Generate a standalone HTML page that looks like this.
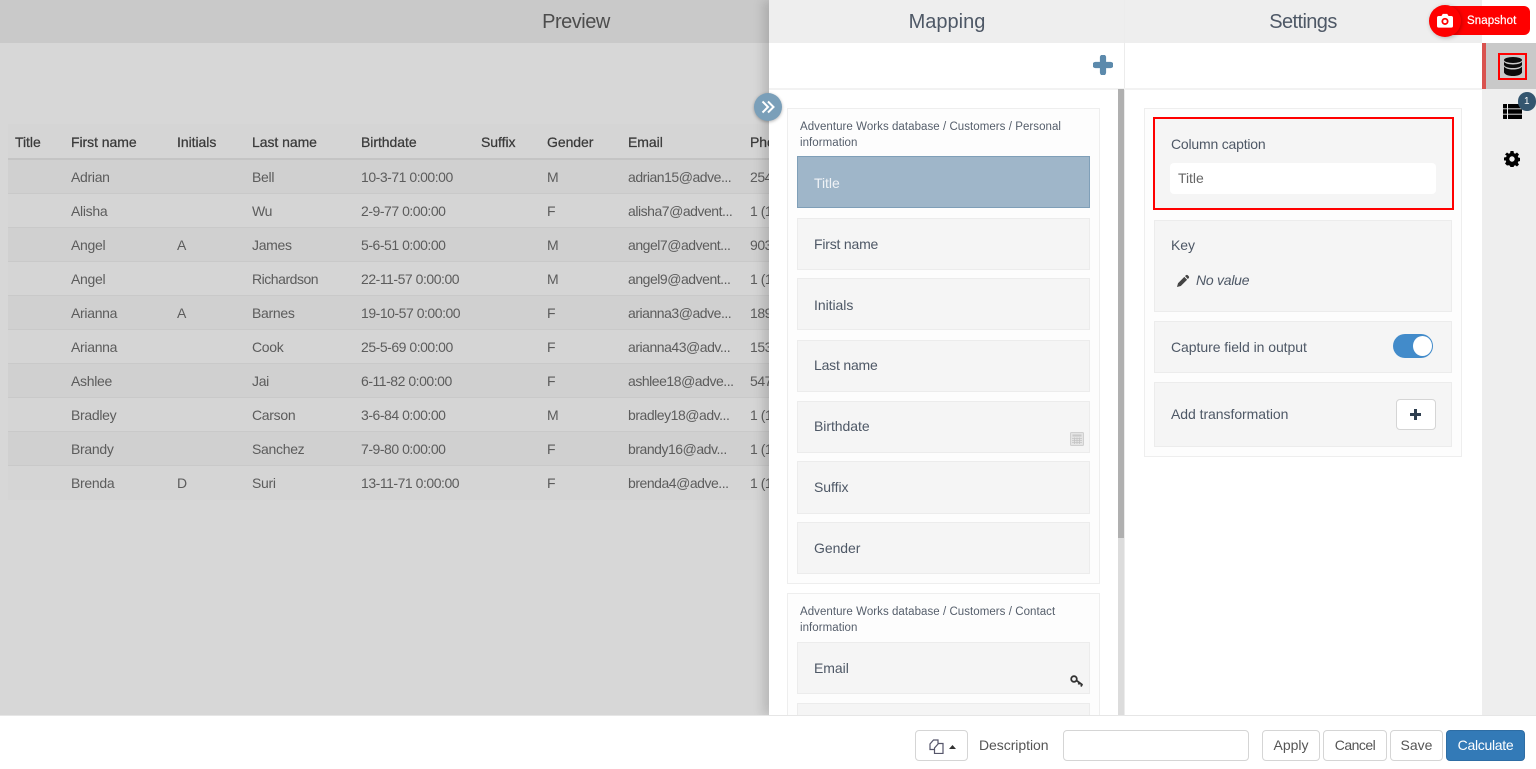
<!DOCTYPE html>
<html><head><meta charset="utf-8"><style>
html,body{margin:0;padding:0}
body{width:1536px;height:769px;position:relative;overflow:hidden;background:#d7d7d7;font-family:"Liberation Sans",sans-serif;color:#4e5866}
div,span,svg{position:absolute;box-sizing:border-box}
.t{line-height:20px;height:20px;white-space:nowrap;font-size:14px;letter-spacing:-.05px}
.h{color:#3a3a3a;letter-spacing:-.05px;-webkit-text-stroke:.25px #3a3a3a}
.d{color:#5c5c5c;letter-spacing:-.3px}
.n{letter-spacing:-.47px}
.r{left:8px;width:762px;height:34px;border-bottom:1px solid #c9c9c9}
.o{background:#d0d0d0}.e{background:#d5d5d5}
.hd{line-height:44px;height:43px;text-align:center;font-size:20px;top:0}
.it{left:797px;width:293px;background:#f5f5f5;border:1px solid #ececec}
.gl{font-size:11.5px;letter-spacing:.05px;color:#555e6b;line-height:15.5px;left:800px;width:285px}
.bx{background:#f5f5f5;border:1px solid #ececec;left:1154px;width:298px}
.btn{background:#fff;border:1px solid #d5d5d5;border-radius:4px;top:730px;height:31px;text-align:center;line-height:29px;font-size:14px;color:#555}
</style></head><body>

<div style="left:0;top:0;width:770px;height:43px;background:#c9c9c9"></div>
<div class="hd" style="left:476px;width:200px;color:#4d4d4d;letter-spacing:-.5px">Preview</div>

<div style="left:8px;top:124px;width:762px;height:36px;background:#d5d5d5;border-bottom:2px solid #c4c4c4"></div>
<div class="r o" style="top:160px"></div><div class="r e" style="top:194px"></div><div class="r o" style="top:228px"></div><div class="r e" style="top:262px"></div><div class="r o" style="top:296px"></div><div class="r e" style="top:330px"></div><div class="r o" style="top:364px"></div><div class="r e" style="top:398px"></div><div class="r o" style="top:432px"></div><div class="r e" style="top:466px;border-bottom:0"></div>

<span class="t h" style="left:15px;top:132px">Title</span><span class="t h" style="left:71px;top:132px">First name</span><span class="t h" style="left:177px;top:132px">Initials</span><span class="t h" style="left:252px;top:132px">Last name</span><span class="t h" style="left:361px;top:132px">Birthdate</span><span class="t h" style="left:481px;top:132px">Suffix</span><span class="t h" style="left:547px;top:132px">Gender</span><span class="t h" style="left:628px;top:132px">Email</span><span class="t h" style="left:750px;top:132px">Phone</span>

<span class="t d" style="left:71px;top:167px">Adrian</span><span class="t d" style="left:252px;top:167px">Bell</span><span class="t d n" style="left:361px;top:167px">10-3-71 0:00:00</span><span class="t d" style="left:547px;top:167px">M</span><span class="t d n" style="left:628px;top:167px">adrian15@adve...</span><span class="t d n" style="left:750px;top:167px">254</span>
<span class="t d" style="left:71px;top:201px">Alisha</span><span class="t d" style="left:252px;top:201px">Wu</span><span class="t d n" style="left:361px;top:201px">2-9-77 0:00:00</span><span class="t d" style="left:547px;top:201px">F</span><span class="t d n" style="left:628px;top:201px">alisha7@advent...</span><span class="t d n" style="left:750px;top:201px">1 (1</span>
<span class="t d" style="left:71px;top:235px">Angel</span><span class="t d" style="left:177px;top:235px">A</span><span class="t d" style="left:252px;top:235px">James</span><span class="t d n" style="left:361px;top:235px">5-6-51 0:00:00</span><span class="t d" style="left:547px;top:235px">M</span><span class="t d n" style="left:628px;top:235px">angel7@advent...</span><span class="t d n" style="left:750px;top:235px">903</span>
<span class="t d" style="left:71px;top:269px">Angel</span><span class="t d n" style="left:252px;top:269px">Richardson</span><span class="t d n" style="left:361px;top:269px">22-11-57 0:00:00</span><span class="t d" style="left:547px;top:269px">M</span><span class="t d n" style="left:628px;top:269px">angel9@advent...</span><span class="t d n" style="left:750px;top:269px">1 (1</span>
<span class="t d" style="left:71px;top:303px">Arianna</span><span class="t d" style="left:177px;top:303px">A</span><span class="t d" style="left:252px;top:303px">Barnes</span><span class="t d n" style="left:361px;top:303px">19-10-57 0:00:00</span><span class="t d" style="left:547px;top:303px">F</span><span class="t d n" style="left:628px;top:303px">arianna3@adve...</span><span class="t d n" style="left:750px;top:303px">189</span>
<span class="t d" style="left:71px;top:337px">Arianna</span><span class="t d" style="left:252px;top:337px">Cook</span><span class="t d n" style="left:361px;top:337px">25-5-69 0:00:00</span><span class="t d" style="left:547px;top:337px">F</span><span class="t d n" style="left:628px;top:337px">arianna43@adv...</span><span class="t d n" style="left:750px;top:337px">153</span>
<span class="t d" style="left:71px;top:371px">Ashlee</span><span class="t d" style="left:252px;top:371px">Jai</span><span class="t d n" style="left:361px;top:371px">6-11-82 0:00:00</span><span class="t d" style="left:547px;top:371px">F</span><span class="t d n" style="left:628px;top:371px">ashlee18@adve...</span><span class="t d n" style="left:750px;top:371px">547</span>
<span class="t d" style="left:71px;top:405px">Bradley</span><span class="t d" style="left:252px;top:405px">Carson</span><span class="t d n" style="left:361px;top:405px">3-6-84 0:00:00</span><span class="t d" style="left:547px;top:405px">M</span><span class="t d n" style="left:628px;top:405px">bradley18@adv...</span><span class="t d n" style="left:750px;top:405px">1 (1</span>
<span class="t d" style="left:71px;top:439px">Brandy</span><span class="t d" style="left:252px;top:439px">Sanchez</span><span class="t d n" style="left:361px;top:439px">7-9-80 0:00:00</span><span class="t d" style="left:547px;top:439px">F</span><span class="t d n" style="left:628px;top:439px">brandy16@adv...</span><span class="t d n" style="left:750px;top:439px">1 (1</span>
<span class="t d" style="left:71px;top:473px">Brenda</span><span class="t d" style="left:177px;top:473px">D</span><span class="t d" style="left:252px;top:473px">Suri</span><span class="t d n" style="left:361px;top:473px">13-11-71 0:00:00</span><span class="t d" style="left:547px;top:473px">F</span><span class="t d n" style="left:628px;top:473px">brenda4@adve...</span><span class="t d n" style="left:750px;top:473px">1 (1</span>

<!-- panel -->
<div style="left:769px;top:0;width:767px;height:715px;background:#fff;box-shadow:-6px 0 10px rgba(0,0,0,.14)"></div>
<div style="left:769px;top:0;width:713px;height:43px;background:#eee"></div>
<div style="left:1124px;top:0;width:1px;height:715px;background:#ececec"></div>
<div style="left:769px;top:88px;width:713px;height:2px;background:#f2f2f2"></div>
<div class="hd" style="left:847px;width:200px">Mapping</div>
<div class="hd" style="left:1203px;width:200px;letter-spacing:-.6px">Settings</div>
<div style="left:1482px;top:43px;width:54px;height:672px;background:#eee"></div>
<div style="left:1482px;top:43px;width:54px;height:46px;background:#c9c9c9;border-left:4px solid #d9534f"></div>

<!-- plus -->
<svg style="left:1093px;top:55px" width="20" height="20" viewBox="0 0 20 20"><path d="M10 2.500v15M2.500 10h15" fill="none" stroke="#5c8aac" stroke-width="6.200" stroke-linecap="round"/></svg>

<!-- scrollbar -->
<div style="left:1118px;top:89px;width:6px;height:626px;background:#dcdcdc"></div>
<div style="left:1118px;top:89px;width:6px;height:449px;background:#b0b0b0"></div>

<!-- groups -->
<div style="left:787px;top:108px;width:313px;height:476px;background:#fdfdfd;border:1px solid #eee"></div>
<div class="gl" style="top:120px">Adventure Works database / Customers / Personal information</div>
<div class="it" style="top:156px;height:52px;background:#9fb6c9;border-color:#7f9fb8"></div>
<span class="t" style="left:814px;top:173px;color:#f0f3f6">Title</span>
<div class="it" style="top:218px;height:52px"></div><span class="t" style="left:814px;top:234px;letter-spacing:-.2px">First name</span>
<div class="it" style="top:278px;height:52px"></div><span class="t" style="left:814px;top:295px">Initials</span>
<div class="it" style="top:340px;height:52px"></div><span class="t" style="left:814px;top:355px;letter-spacing:-.2px">Last name</span>
<div class="it" style="top:401px;height:52px"></div><span class="t" style="left:814px;top:416px">Birthdate</span>
<div class="it" style="top:461px;height:53px"></div><span class="t" style="left:814px;top:477px">Suffix</span>
<div class="it" style="top:522px;height:52px"></div><span class="t" style="left:814px;top:538px">Gender</span>
<svg style="left:1070px;top:432px" width="14" height="14" viewBox="0 0 14 14"><rect x=".5" y=".5" width="13" height="13" rx="1" fill="#e4e4e4" stroke="#cfcfcf"/><path d="M2.500 2.500h9v2h-9z" fill="#c9c9c9"/><path d="M2 6.500h10M2 8.500h10M2 10.500h10M4.500 5.500v6.500M7 5.500v6.500M9.500 5.500v6.500" stroke="#c4c4c4" stroke-width=".8"/></svg>

<div style="left:787px;top:593px;width:313px;height:130px;background:#fdfdfd;border:1px solid #eee"></div>
<div class="gl" style="top:605px">Adventure Works database / Customers / Contact information</div>
<div class="it" style="top:642px;height:52px"></div><span class="t" style="left:814px;top:658px">Email</span>
<div class="it" style="top:703px;height:20px"></div>
<svg style="left:1069px;top:673px" width="16" height="16" viewBox="0 0 16 16"><circle cx="5" cy="6" r="2.800" fill="none" stroke="#333" stroke-width="1.800"/><path d="M7.500 7.500l6 4.500M10.500 9.500l-1 2M13 11.500l-1 2" stroke="#333" stroke-width="1.800" fill="none"/></svg>

<!-- collapse btn -->
<div style="left:754px;top:93px;width:28px;height:28px;border-radius:50%;background:#7a9fb9;box-shadow:0 1px 3px rgba(0,0,0,.3)"></div>
<svg style="left:760px;top:99px" width="16" height="16" viewBox="0 0 16 16"><path d="M2.500 2.500L8 8l-5.500 5.500M8 2.500L13.500 8 8 13.500" fill="none" stroke="#fff" stroke-width="2"/></svg>

<!-- settings -->
<div style="left:1144px;top:108px;width:318px;height:349px;background:#fdfdfd;border:1px solid #eee"></div>
<div style="left:1153px;top:117px;width:301px;height:93px;background:#f5f5f5;border:2px solid #f00"></div>
<span class="t" style="left:1171px;top:134px;letter-spacing:-.2px">Column caption</span>
<div style="left:1170px;top:163px;width:266px;height:31px;background:#fff;border-radius:4px"></div>
<span class="t" style="left:1178px;top:168px;color:#666">Title</span>

<div class="bx" style="top:220px;height:92px"></div>
<span class="t" style="left:1171px;top:235px">Key</span>
<svg style="left:1177px;top:274px" width="13" height="13" viewBox="0 0 13 13"><path d="M0 13l1-3.800 6.300-6.300 2.800 2.800L3.800 12zM8 2l.8-.6a1.500 1.500 0 0 1 2.100 0l.7.7a1.500 1.500 0 0 1 0 2.100l-.8.8z" fill="#444"/></svg>
<span class="t" style="left:1196px;top:270px;font-style:italic;letter-spacing:-.25px">No value</span>

<div class="bx" style="top:321px;height:52px"></div>
<span class="t" style="left:1171px;top:337px">Capture field in output</span>
<div style="left:1393px;top:334px;width:40px;height:24px;border-radius:12px;background:#428bca"></div>
<div style="left:1413px;top:336px;width:19px;height:20px;border-radius:50%;background:#fff"></div>

<div class="bx" style="top:382px;height:65px"></div>
<span class="t" style="left:1171px;top:404px">Add transformation</span>
<div style="left:1396px;top:399px;width:40px;height:31px;background:#fff;border:1px solid #d5d5d5;border-radius:4px"></div>
<svg style="left:1410px;top:409px" width="11" height="11" viewBox="0 0 11 11"><path d="M4 0h3v4h4v3H7v4H4V7H0V4h4z" fill="#2f3f50"/></svg>

<!-- snapshot -->
<div style="left:1445px;top:6px;width:85px;height:29px;background:#f00;border-radius:6px"></div>
<div style="left:1429px;top:5px;width:32px;height:32px;border-radius:50%;background:#f00;box-shadow:1px 1px 4px rgba(0,0,0,.25)"></div>
<svg style="left:1437px;top:13px" width="16" height="15" viewBox="0 0 18 16"><path fill-rule="evenodd" d="M2 3h3l1.500-2.500h5L13 3h3a2 2 0 0 1 2 2v9a2 2 0 0 1-2 2H2a2 2 0 0 1-2-2V5a2 2 0 0 1 2-2zM9 5a4 4 0 1 0 0 8 4 4 0 0 0 0-8zM9 7a2 2 0 1 1 0 4 2 2 0 0 1 0-4z" fill="#fff"/></svg>
<span class="t" style="left:1467px;top:11px;color:#fff;font-size:11.5px;letter-spacing:.1px;-webkit-text-stroke:.2px #fff">Snapshot</span>

<!-- side icons -->
<div style="left:1498px;top:53px;width:29px;height:27px;border:2px solid #f00"></div>
<svg style="left:1504px;top:57px" width="18" height="19" viewBox="0 0 18 19"><ellipse cx="9" cy="3" rx="9" ry="3" fill="#0a0a0a"/><path d="M0 4.800C1.500 6.800 5 7.500 9 7.500s7.500-.7 9-2.700v3.200c-1 2-4.500 3-9 3S1 10 0 8zM0 9.500c1.500 2.200 5 3 9 3s7.500-.8 9-3v6c-1 2.300-4.500 3.500-9 3.500S1 17.800 0 15.500z" fill="#0a0a0a"/></svg>
<svg style="left:1503px;top:104px" width="19" height="15" viewBox="0 0 19 15"><path d="M.5 0h3.500v4.400H.5a.5.500 0 0 1-.5-.5V.5A.5.500 0 0 1 .5 0zM5 0h13.500a.5.500 0 0 1 .5.5v3.400a.5.500 0 0 1-.5.5H5zM0 5.300h4v4.400H0zM5 5.300h14v4.400H5zM0 10.600h4V15H.5a.5.500 0 0 1-.5-.5zM5 10.600h14v3.900a.5.500 0 0 1-.5.5H5z" fill="#000"/></svg>
<div style="left:1517.500px;top:92px;width:18.500px;height:18.500px;border-radius:50%;background:#34566f;color:#fff;font-size:10px;line-height:19px;text-align:center">1</div>
<svg style="left:1504px;top:151px" width="16" height="16" viewBox="0 0 16 16"><path fill-rule="evenodd" d="M6.500 0h3l.4 2.100 1.300.6L13 1.500l2 2-1.200 1.800.6 1.300 2.100.4v3l-2.100.4-.6 1.300 1.200 1.800-2 2-1.800-1.200-1.300.6-.4 2.100h-3l-.4-2.100-1.300-.6L3 14.500l-2-2 1.200-1.800-.6-1.300L0 9.500v-3l2.100-.4.6-1.300L1 3.500l2-2 1.800 1.200 1.300-.6zM8 5.300a2.700 2.700 0 1 0 0 5.400 2.700 2.700 0 0 0 0-5.400z" fill="#000"/></svg>

<!-- bottom bar -->
<div style="left:0;top:715px;width:1536px;height:54px;background:#fff;border-top:1px solid #e6e6e6"></div>
<div class="btn" style="left:915px;width:53px"></div>
<svg style="left:929px;top:739px" width="15" height="15" viewBox="0 0 15 15"><path d="M5.500 10.500H1V5l3.500-4H9v3.500" fill="none" stroke="#55556a" stroke-width="1.200"/><path d="M5.500 9V14.500H14V4.500H9.500z" fill="#fff" stroke="#55556a" stroke-width="1.200"/></svg>
<svg style="left:949px;top:745px" width="7" height="4" viewBox="0 0 7 4"><path d="M3.500 0L7 4H0z" fill="#333"/></svg>
<span class="t" style="left:979px;top:735px;color:#555">Description</span>
<div class="btn" style="left:1063px;width:186px"></div>
<div class="btn" style="left:1262px;width:58px">Apply</div>
<div class="btn" style="left:1323px;width:64px;letter-spacing:-.5px">Cancel</div>
<div class="btn" style="left:1390px;width:53px">Save</div>
<div class="btn" style="left:1446px;width:79px;background:#337ab7;border-color:#2e6da4;color:#fff;letter-spacing:-.3px">Calculate</div>
</body></html>
